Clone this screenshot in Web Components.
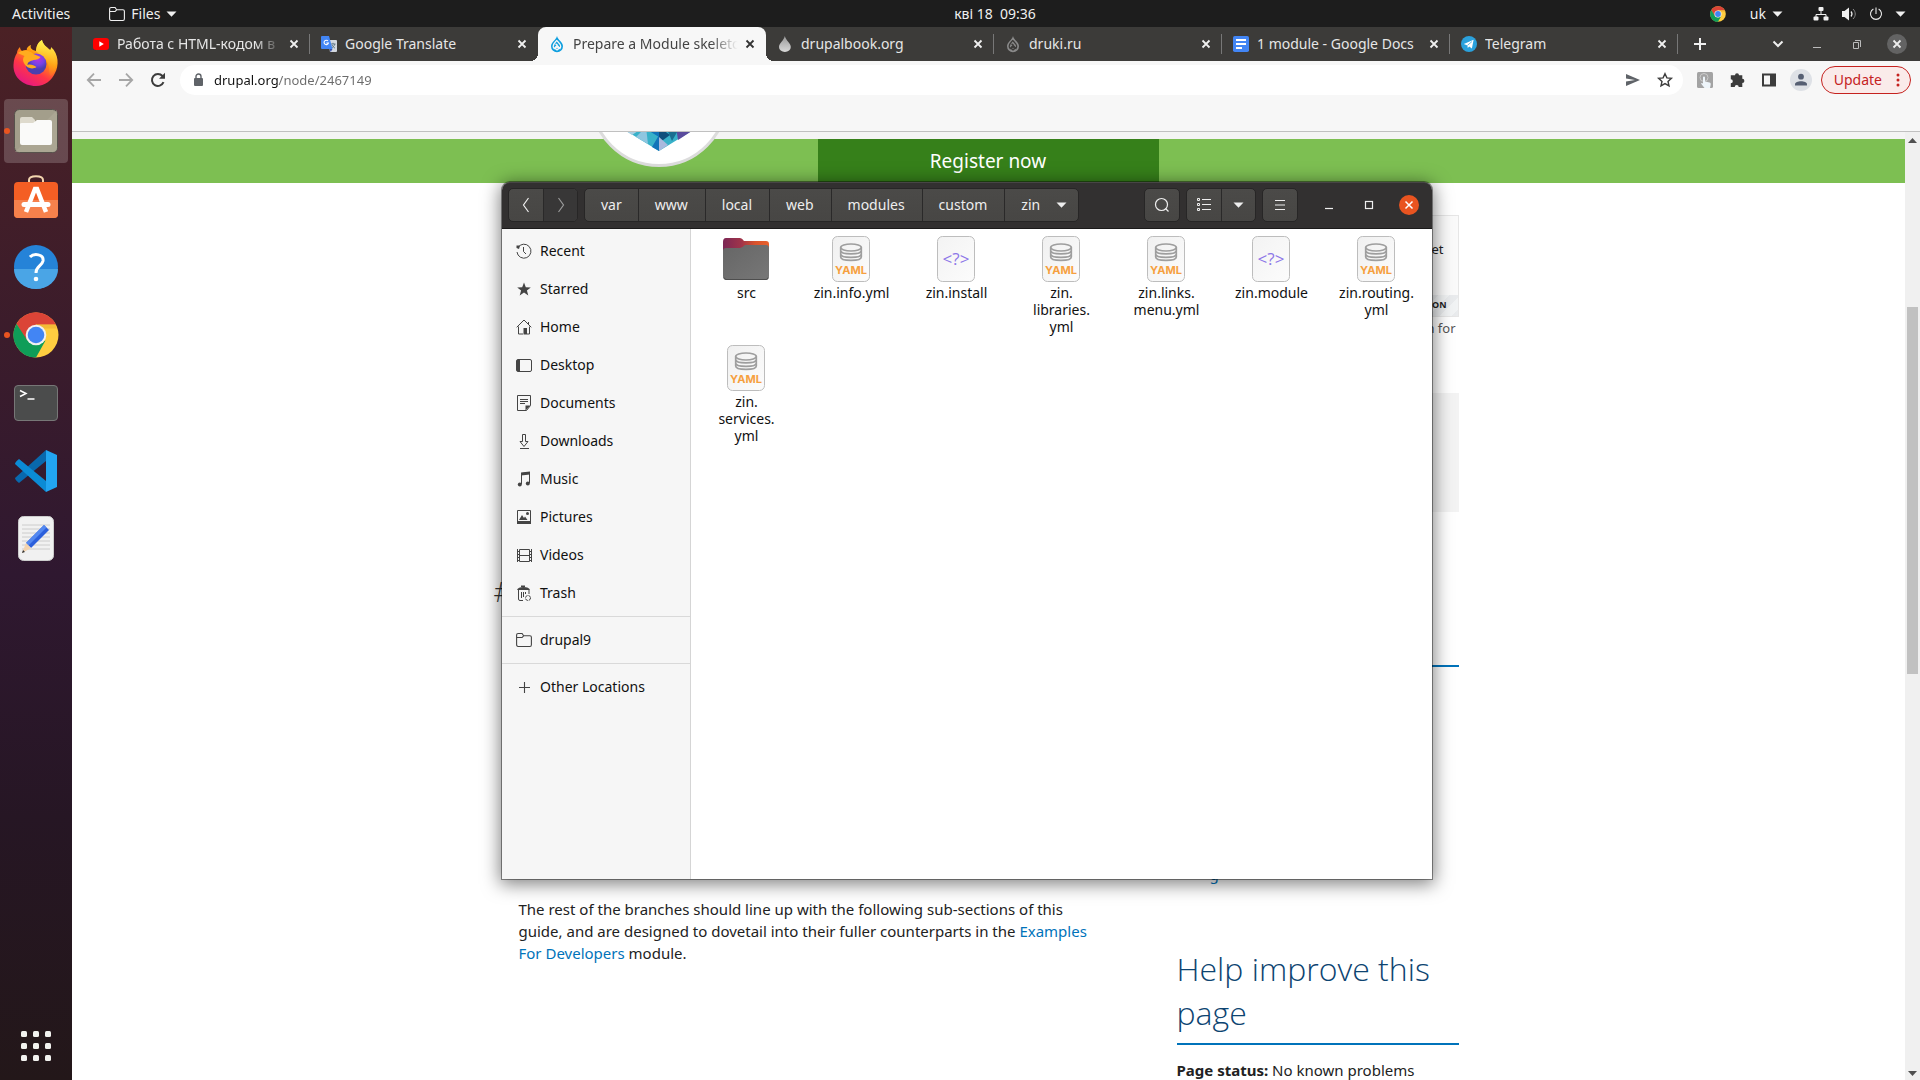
<!DOCTYPE html>
<html lang="en">
<head>
<meta charset="utf-8">
<title>Desktop</title>
<style>
  html, body { margin: 0; height: 100%; overflow: hidden; }
  body { font-family: "Noto Sans", "Open Sans", sans-serif; font-size: 14px; line-height: 20px; color: #222; }
</style>
</head>
<body>
<desk-top></desk-top>
<script>
const ICONS = {
  folderline: [16,16,'<path d="M.6 12.5V3c0-1 .5-1.500 1.500-1.500h4l1.500 2.200h6.300c1 0 1.500.5 1.500 1.500v7.500c0 1.200-.5 1.800-1.500 1.800H2.100C1.100 14.500.6 13.700.6 12.500zM.6 5.500h5.500l1.500-1.700" fill="none" stroke="currentColor" stroke-width="1.100"/>'],
  tri: [11,6,'<path d="M.5.5h10l-5 5.300z" fill="currentColor"/>'],
  x: [10,10,'<path d="M1.500 1.500l7 7m0-7l-7 7" stroke="currentColor" stroke-width="1.800" fill="none"/>'],
  youtube: [16,16,'<rect y="2" width="16" height="12" rx="3" fill="#f00"/><path d="M6.300 5.300v5.400L10.800 8z" fill="#fff"/>'],
  translate: [16,16,'<path d="M7 4h8a1 1 0 0 1 1 1v10a1 1 0 0 1-1 1H9z" fill="#d3d8e0"/><path d="M9.500 8h5M12 6.800V8m1.800 0c-.4 2-2 3.500-3.300 4.200m.5-3.200c.6 1.300 1.800 2.500 3 3.200" stroke="#607988" fill="none"/><path d="M1 0h7l3.500 13H1a1 1 0 0 1-1-1V1a1 1 0 0 1 1-1z" fill="#4285f4"/><path d="M8.500 13h3L9.700 16z" fill="#3750a8"/><path d="M7 5A2.200 2.200 0 1 0 7.400 7H5.300" stroke="#fff" fill="none" stroke-width="1.100"/>'],
  drupal: [16,16,'<path d="M8 0c-.5 2.300-2 3.600-3.300 5C3.200 6.500 2 8.200 2 10.200a6 6 0 0 0 12 0c0-2-1.200-3.700-2.700-5.200C10 3.600 8.500 2.300 8 0z" fill="currentColor"/><path d="M8 4.200c-1.500 2-3.800 3.500-3.800 6 0 .9.400 1.700 1 2.300L8.800 8.600M8 4.800c1.500 1.700 3.700 3.200 3.700 5.500 0 .8-.3 1.500-.7 2.100L6.600 7.700M8 14l1.700-1.400L8 10.800l-1.700 1.800z" fill="none" stroke="var(--hole,#f7f7f7)" stroke-width="1.300"/>'],
  drop: [16,16,'<defs><linearGradient id="dg" x2="0" y2="1"><stop stop-color="#999"/><stop offset="1" stop-color="#d9d9d9"/></linearGradient></defs><path d="M7.800 0C7 4.500 2 7 2 11a5.800 5 0 0 0 11.800 0C13.800 7 8.800 4.500 7.800 0z" fill="url(#dg)"/>'],
  docs: [16,16,'<rect width="16" height="16" rx="1.800" fill="#4285f4"/><path d="M3 4h10M3 8h10M3 12h6" stroke="#fff" stroke-width="2"/>'],
  telegram: [16,16,'<circle cx="8" cy="8" r="8" fill="#2ba1dc"/><path d="M2.800 8l9.800-4.200-1.700 8.700-2.700-2-1.400 1.600-.4-2.700z" fill="#fff"/><path d="M6.500 9.300l4.500-3.800" stroke="#2ba1dc" stroke-width=".7"/>'],
  plus: [16,16,'<path d="M8 2v12M2 8h12" stroke="currentColor" stroke-width="2"/>'],
  chev: [12,8,'<path d="M1.500 1.500L6 6l4.500-4.500" stroke="currentColor" stroke-width="2" fill="none"/>'],
  cmin: [10,10,'<path d="M1 8.500h8" stroke="currentColor"/>'],
  crestore: [10,10,'<path d="M1.500 3.500h5v6h-5zM3 1.500h5.500V8" stroke="currentColor" fill="none"/>'],
  back: [16,16,'<path d="M15 8H2m6-6.300L1.800 8 8 14.300" stroke="currentColor" stroke-width="1.800" fill="none"/>'],
  fwd: [16,16,'<path d="M1 8h13M8 1.700L14.200 8 8 14.300" stroke="currentColor" stroke-width="1.800" fill="none"/>'],
  reload: [16,16,'<path d="M13.500 10.200A6 6 0 1 1 12.500 4l1 1.300" stroke="currentColor" stroke-width="2" fill="none"/><path d="M15 .8v6H9z" fill="currentColor"/>'],
  lock: [10,14,'<rect x="0" y="5" width="9" height="8" rx="1" fill="currentColor"/><path d="M2 6V3.500a2.500 2.500 0 0 1 5 0V6" stroke="currentColor" stroke-width="1.400" fill="none"/>'],
  send: [16,16,'<path d="M1 2l14 6-14 6V9.500L10 8 1 6.500z" fill="currentColor"/>'],
  star: [16,16,'<path d="M8 1.700l1.900 4.200 4.500.4-3.400 3.100 1 4.500L8 11.600l-4 2.300 1-4.500-3.400-3.100 4.500-.4z" stroke="currentColor" stroke-width="1.400" fill="none"/>'],
  touch: [16,16,'<rect width="16" height="16" rx="1.500" fill="#a3a3a3"/><circle cx="7" cy="5.500" r="4" fill="none" stroke="#ccc"/><path d="M6 5.500a1 1 0 0 1 2 0v4l4.500 1c1 .3 1.400 1 1.200 2L13 16H7.500L4 11.500c.5-1 1.500-.5 2 0z" fill="#eef5fa"/>'],
  puzzle: [16,16,'<path d="M6 3.200a2 2 0 0 1 4 0h3.300v3.600a2 2 0 0 1 0 4.200v4H9.700a2 2 0 0 0-4 0H1.800v-3.800a2 2 0 0 0 0-4V3.200z" fill="currentColor"/>'],
  panel: [16,16,'<path d="M1 1.500h14v13H1zM3 3.500v9h6v-9z" fill="currentColor" fill-rule="evenodd"/>'],
  avatar: [22,22,'<circle cx="11" cy="11" r="11" fill="#dee1e6"/><circle cx="11" cy="7.700" r="2.900" fill="#565f73"/><path d="M5 16.500v-1.300c0-4 12-4 12 0v1.300z" fill="#565f73"/>'],
  dots: [4,14,'<circle cx="2" cy="2" r="1.500" fill="currentColor"/><circle cx="2" cy="7" r="1.500" fill="currentColor"/><circle cx="2" cy="12" r="1.500" fill="currentColor"/>'],
  network: [16,16,'<path d="M8 3v5M3 13V8.500h10V13" stroke="currentColor" fill="none"/><rect x="5.500" y="1" width="5" height="4" rx="1" fill="currentColor"/><rect x=".5" y="10.500" width="5" height="4" rx="1" fill="currentColor"/><rect x="10.500" y="10.500" width="5" height="4" rx="1" fill="currentColor"/>'],
  volume: [16,16,'<path d="M1 5h2.500L8 1.500v13L3.500 11H1z" fill="currentColor"/><path d="M10 5.500c1.300 1.600 1.300 3.400 0 5" stroke="currentColor" fill="none" stroke-width="1.200"/><path d="M12 3c3 3 3 7 0 10" stroke="#888" fill="none"/>'],
  power: [16,16,'<path d="M5 2.300a6.300 6.300 0 1 0 6 0M8 .5V8" stroke="currentColor" fill="none" stroke-width="1.200"/>'],
  chrome: [46,46,'<circle cx="23" cy="23" r="22.500" fill="#ffcd40"/><path d="M3.500 11.700A22.500 22.500 0 0 1 43 12.500H23L13 29z" fill="#db4437"/><path d="M3.500 11.700A22.500 22.500 0 0 0 23 45.500L32.500 28.500 23 33 14 28z" fill="#0f9d58"/><path d="M43 12.500H23v4h20.500z" fill="#e8a92c" opacity=".5"/><circle cx="23" cy="23" r="10.300" fill="#f1f1f1"/><circle cx="23" cy="23" r="8.300" fill="#4285f4"/>'],
  firefox: [46,46,'<defs><linearGradient id="fa" x1=".8" y1=".05" x2=".25" y2="1"><stop stop-color="#fff44f"/><stop offset=".35" stop-color="#ff980e"/><stop offset=".65" stop-color="#ff3647"/><stop offset="1" stop-color="#e31587"/></linearGradient><radialGradient id="fb" cx=".6" cy=".25"><stop stop-color="#b833e1"/><stop offset=".6" stop-color="#7542e5"/><stop offset="1" stop-color="#4b3fae"/></radialGradient><linearGradient id="fc" x2="0" y2="1"><stop stop-color="#fff44f"/><stop offset="1" stop-color="#ff980e" stop-opacity=".2"/></linearGradient></defs><path d="M4 13c0-2 1-4 3-6 0 2 1 3 2 4 2-1 3-1 5-1-1-1 1-4 4-5-1 2 0 4 2 5l3 1c0-4 2-9 6-11 1 5 4 6 8 10 1-1 1-2 1-3 8 7 8 19 4 26-3 7-10 13-19 13C10 46 0 37 .5 25 .700 20 2 16 4 13z" fill="url(#fa)"/><path d="M23 11c0-4 2-9 6-11 1 5 4 6 8 10 7 9 8 19 1 26-3-1 0-13-7-18z" fill="url(#fc)"/><circle cx="23" cy="24" r="10.500" fill="url(#fb)"/><path d="M4.500 13c6-4 12-3 16 1l7 3c-1 2-4 3-7 3-3 1-6 2-6 5 3-1 6 0 9 2-4 3-10 1-12-3-2-3-2-6 0-8z" fill="#ffac1e"/>'],
  files: [44,44,'<rect x=".5" y=".5" width="43" height="43" rx="5" fill="#a39e8b" stroke="#57524c"/><path d="M1 43L43 1v38q0 4-4 4z" fill="#b1ac9a" opacity=".6"/><path d="M6 12V10q0-2 2-2h10l3 3v6H6z" fill="#dedacd"/><path d="M6 15q0-1 2-1h11l4-3h13q2 0 2 2v21q0 2-2 2H8q-2 0-2-2z" fill="#fafaf9"/>'],
  software: [44,44,'<g transform="translate(0 -4)"><path d="M15 10V7c0-5 14-5 14 0v3" stroke="#f3d6af" stroke-width="2" fill="none"/><rect x="0" y="9" width="44" height="36" rx="4" fill="#f45e24"/><path d="M0 27h44v14q0 4-4 4H4q-4 0-4-4z" fill="#f6814c"/><path d="M12 39l9-23h2l9 23" stroke="#fff" stroke-width="4.500" fill="none"/><path d="M10 31.500h24" stroke="#fff" stroke-width="5" stroke-linecap="round"/></g>'],
  help: [44,44,'<circle cx="22" cy="22" r="22" fill="#2583d8"/><path d="M0 24h44a22 20 0 0 1-44 0z" fill="#4aa5e6"/><path d="M16 12c4-4 14-3 13 4-1 5-7 5-7 12" stroke="#fff" stroke-width="3" fill="none"/><circle cx="22" cy="34" r="2.300" fill="#fff"/>'],
  terminal: [44,36,'<rect x=".5" y=".5" width="43" height="35" rx="3.500" fill="#4b4c4c" stroke="#777"/><path d="M6 5.500l6 3-6 3" stroke="#fff" stroke-width="1.500" fill="none"/><path d="M13.500 14h7" stroke="#fff" stroke-width="1.500"/>'],
  vscode: [42,42,'<path d="M31 0L0 28q0 2 4 5l27-22z" fill="#0968ad"/><path d="M31 42L0 14q0-2 4-5l27 22z" fill="#0b8bd5"/><path d="M31 0l11 5v32l-11 5z" fill="#22a5f1"/>'],
  editor: [36,46,'<rect x=".5" y=".5" width="35" height="44" rx="5" fill="#f1f1f1" stroke="#ccc"/><path d="M4 9h28M4 13h28M4 17h28M4 21h28M4 25h28M4 29h28M4 33h28" stroke="#ccc"/><path d="M26 9l5 5-18 18-5-5z" fill="#2b5fdc"/><path d="M26 9l2.500 2.500-18 18L8 27z" fill="#5388f0"/><path d="M8 27l5 5-9 5z" fill="#f3d4b0"/><path d="M5 34l2 2-3 1z" fill="#333"/>'],
  apps: [30,30,'<g fill="#f2f2ef"><rect width="6" height="6" rx="1.500"/><rect x="12" width="6" height="6" rx="1.500"/><rect x="24" width="6" height="6" rx="1.500"/><rect y="12" width="6" height="6" rx="1.500"/><rect x="12" y="12" width="6" height="6" rx="1.500"/><rect x="24" y="12" width="6" height="6" rx="1.500"/><rect y="24" width="6" height="6" rx="1.500"/><rect x="12" y="24" width="6" height="6" rx="1.500"/><rect x="24" y="24" width="6" height="6" rx="1.500"/></g>'],
  prev: [8,16,'<path d="M6.500 1L1.500 8l5 7" stroke="currentColor" fill="none" stroke-width="1.200"/>'],
  next: [8,16,'<path d="M1.500 1l5 7-5 7" stroke="currentColor" fill="none" stroke-width="1.200"/>'],
  search: [16,16,'<circle cx="7.500" cy="7.500" r="6" stroke="currentColor" fill="none" stroke-width="1.200"/><path d="M11.500 11.500l3 3" stroke="currentColor" stroke-width="1.300"/>'],
  list: [14,13,'<path d="M.5.500h2v2h-2zM.5 5.500h2v2h-2zM.5 10.500h2v2h-2zM5 1.500h9M5 6.500h9M5 11.500h9" stroke="currentColor" fill="none"/>'],
  menu: [12,12,'<path d="M1 1.500h10M1 6h10M1 10.500h10" stroke="currentColor"/>'],
  wmin: [10,10,'<path d="M1 8.500h8" stroke="currentColor" stroke-width="1.200"/>'],
  wmax: [10,10,'<rect x="1.500" y="1.500" width="7" height="7" stroke="currentColor" fill="none" stroke-width="1.200"/>'],
  wclose: [10,10,'<path d="M1.500 1.500l7 7m0-7l-7 7" stroke="currentColor" stroke-width="1.500"/>'],
  recent: [16,16,'<path d="M2 4.500A7 7 0 1 1 1 9" stroke="currentColor" fill="none"/><path d="M.5 2.500l3.500 0-1 3.500-2.500-1z" fill="currentColor"/><path d="M7.500 4v4.500L10 11" stroke="currentColor" fill="none"/>'],
  starred: [16,16,'<path d="M8 1.500l1.800 4.700 5 .2-3.900 3.100 1.400 4.900L8 11.600l-4.300 2.800 1.400-4.900L1.200 6.400l5-.2z" fill="currentColor"/>'],
  home: [16,16,'<path d="M.7 8.300L8 1l7.300 7.300M2.500 7.500v7.500H7M12.500 3v3M13.500 7.500V15h-2.500" stroke="currentColor" fill="none"/><path d="M7.500 9H11v6.500H7.500z" fill="currentColor"/>'],
  desktop: [16,16,'<rect x=".5" y="2.500" width="15" height="12" rx="1.500" stroke="currentColor" fill="none"/><path d="M1 3h3v11H1z" fill="currentColor"/>'],
  documents: [16,16,'<path d="M1.500.5h13v10l-4 5h-9z" stroke="currentColor" fill="none"/><path d="M4 4.500h8M4 6.500h8M4 8.500h5" stroke="currentColor"/><path d="M9.500 10.500h5l-5 5z" fill="currentColor"/>'],
  downloads: [16,16,'<path d="M6.500 1.500h3v7h2.500l-4 5-4-5h2.500z" stroke="currentColor" fill="none"/><path d="M4 15.500h9" stroke="currentColor"/>'],
  music: [16,16,'<path d="M5.500 13V2.500l8-1V12" stroke="currentColor" fill="none"/><path d="M5 1.500L14 .5v3L5 4.500z" fill="currentColor"/><circle cx="3.800" cy="13.500" r="2" fill="currentColor"/><circle cx="11.800" cy="12.500" r="2" fill="currentColor"/>'],
  pictures: [16,16,'<path d="M1.500 1.500h13v13h-13z" stroke="currentColor" fill="none"/><path d="M1 12h14v3H1zM3 11l3-5 2 3 1-1.500 2.500 3.500z" fill="currentColor"/><circle cx="11.500" cy="4.500" r="1.500" fill="currentColor"/>'],
  videos: [16,16,'<path d="M1.500 2v13M15.500 2v13M3.500 2.500v12h10v-12zM3.500 8.500h10M1 4.500h2.500M1 7.500h2.500M1 10.500h2.500M1 13.500h2.500M13.500 4.500H16M13.500 7.500H16M13.500 10.500H16M13.500 13.500H16" stroke="currentColor" fill="none"/>'],
  trash: [16,16,'<path d="M2.500 5v9q0 1.500 1.500 1.500h3M13 5v4M5.500 7v6M7.500 7v5M9.500 7v2" stroke="currentColor" fill="none"/><path d="M1 5q1-3 6.500-3T14 5zM5 2V.5h4V2z" fill="currentColor"/><circle cx="12" cy="13" r="2.500" stroke="currentColor" fill="none" stroke-dasharray="3 1"/>'],
  add: [16,16,'<path d="M8.500 3v11M3 8.500h11" stroke="currentColor" stroke-width="1.100"/>'],
  folder: [46,46,'<defs><linearGradient id="ga"><stop stop-color="#7c2755"/><stop offset=".4" stop-color="#a0344a"/><stop offset=".7" stop-color="#d9532c"/><stop offset="1" stop-color="#e9612c"/></linearGradient><linearGradient id="gb" x2="1" y2="1"><stop stop-color="#666"/><stop offset="1" stop-color="#777"/></linearGradient></defs><path d="M0 6q0-4 3-4h14q2 0 4 3h22q3 0 3 3v10H0z" fill="url(#ga)"/><path d="M0 15q0-3 3-3h14q2 0 5-3h21q3 0 3 3v28q0 4-3 4H3q-3 0-3-4z" fill="url(#gb)"/><path d="M1 41.500q1 2 2 2h40q2 0 2-2" stroke="#4e4e4e" fill="none"/>'],
  yaml: [38,46,'<defs><linearGradient id="yb" x2="1" y2="1"><stop stop-color="#f0f0f0"/><stop offset="1" stop-color="#fcfcfc"/></linearGradient></defs><rect x=".5" y=".5" width="37" height="45" rx="5" fill="url(#yb)" stroke="#bdbdbd"/><g stroke="#9e9e9e" fill="none" stroke-width="1.700"><ellipse cx="19" cy="11.500" rx="10.300" ry="3.500"/><path d="M8.700 11.500v9.500c0 4.500 20.600 4.500 20.600 0v-9.500M8.700 14.500c0 4.500 20.600 4.500 20.600 0M8.700 18c0 4.500 20.600 4.500 20.600 0"/></g><text x="19" y="38" font-family="Inter,sans-serif" font-weight="700" font-size="11" text-anchor="middle" fill="#f6a03f">YAML</text>'],
  php: [38,46,'<defs><linearGradient id="pb" x2="1" y2="1"><stop stop-color="#f3f3f3"/><stop offset="1" stop-color="#fcfcfc"/></linearGradient></defs><rect x=".5" y=".5" width="37" height="45" rx="5" fill="url(#pb)" stroke="#bdbdbd"/><text x="19" y="29" font-family="Open Sans,sans-serif" font-size="17" text-anchor="middle" fill="#8d76e8">&lt;?&gt;</text>'],
  sbup: [9,5,'<path d="M0 5h9L4.500 0z" fill="#505050"/>'],
  sbdown: [9,5,'<path d="M0 0h9L4.500 5z" fill="#505050"/>'],
  badge: [138,138,'<circle cx="69" cy="69" r="67.500" fill="#fff" stroke="#dcdcdc" stroke-width="3"/><path d="M20 92l49 30 49-30z" fill="#38b1c9"/><path d="M30 98l12 8 12-8zM42 90l12 16 8-16z" fill="#a9cfe2"/><path d="M46 108l10-10 2 17z" fill="#8fc6e0"/><path d="M56 100l13-4v12zM62 118l7-12v16z" fill="#1273b9"/><path d="M69 98l11 8-11 8z" fill="#0f4f7d"/><path d="M69 108l9 8-9 6z" fill="#a9b9dd"/><path d="M76 98h14l-8 14z" fill="#1a6e90"/><path d="M86 98h22l-20 13z" fill="#5a4b9d"/><path d="M98 98h12l-8 5z" fill="#c43c8c"/>']
};

const define = (tag, css, html) => customElements.define(tag, class extends HTMLElement {
  constructor() {
    super();
    this.attachShadow({ mode: 'open' });
  }
  connectedCallback() {
    const attr = n => this.getAttribute(n) || '';
    this.shadowRoot.innerHTML = `<style>*{box-sizing:border-box}button{font:inherit;color:inherit;background:none;border:0;padding:0;margin:0}${css}</style>${typeof html === 'function' ? html(attr) : html}`;
  }
});

define('ui-icon', ':host{display:inline-flex;flex:none}svg{display:block;overflow:visible}', attr => {
  const [w, h, body] = ICONS[attr('name')];
  const size = attr('size') || w;
  return `<svg width="${size}" height="${Math.round(size * h / w)}" viewBox="0 0 ${w} ${h}" aria-hidden="true">${body}</svg>`;
});

/* System bar */
define('top-bar', `
  :host{display:grid;grid-template-columns:1fr auto 1fr;align-items:center;background:#1d1d1d;color:#f0f0f0;height:27px;padding:0 14px 0 12px}
  .side{display:flex;align-items:center}
  .app{display:flex;align-items:center;gap:6px;margin-left:39px}
  .right{justify-content:flex-end;gap:12px}
  .lang{display:flex;align-items:center;gap:6px;margin:0 18px 0 12px}
  .clock{margin-left:72px}`,
`<div class="side"><button>Activities</button><button class="app"><ui-icon name="folderline"></ui-icon>Files<ui-icon name="tri"></ui-icon></button></div>
 <button class="clock">кві 18&nbsp; 09:36</button>
 <div class="side right"><ui-icon name="chrome" size="16"></ui-icon><button class="lang">uk<ui-icon name="tri"></ui-icon></button><ui-icon name="network"></ui-icon><ui-icon name="volume"></ui-icon><ui-icon name="power" size="14"></ui-icon><ui-icon name="tri"></ui-icon></div>`);

/* Dock */
define('dock-item', `
  :host{display:block;position:relative;width:64px;height:64px;border-radius:4px}
  :host([active]){background:rgba(255,255,255,.19)}
  :host([running])::before{content:"";position:absolute;left:0;top:29px;width:6px;height:6px;border-radius:3px;background:#e95420}
  button{display:flex;width:100%;height:100%;align-items:center;justify-content:center}`,
  attr => `<button aria-label="${attr('label')}"><ui-icon name="${attr('icon')}"></ui-icon></button>`);

define('app-dock', `
  :host{display:flex;flex-direction:column;gap:4px;width:72px;padding:4px 4px 2px;background:linear-gradient(#4b2125,#2f1830 52%,#261624 75%,#231719)}
  .apps{margin-top:auto}`,
`<dock-item icon="firefox" label="Firefox"></dock-item>
 <dock-item icon="files" label="Files" active running></dock-item>
 <dock-item icon="software" label="Software"></dock-item>
 <dock-item icon="help" label="Help"></dock-item>
 <dock-item icon="chrome" label="Chrome" running></dock-item>
 <dock-item icon="terminal" label="Terminal"></dock-item>
 <dock-item icon="vscode" label="Code"></dock-item>
 <dock-item icon="editor" label="Editor"></dock-item>
 <dock-item class="apps" icon="apps" label="Applications"></dock-item>`);

/* Browser */
define('browser-tab', `
  :host{display:flex;align-items:center;flex:0 1 228px;min-width:0;height:34px;padding:0 11px;color:#e6e6e6;position:relative;--hole:#3c3b39}
  .title{flex:1;min-width:0;margin:0 4px 0 8px;overflow:hidden;white-space:nowrap;text-overflow:clip}
  :host([long]) .title{-webkit-mask-image:linear-gradient(90deg,#000 82%,transparent 98%);mask-image:linear-gradient(90deg,#000 82%,transparent 98%)}
  button{display:flex;width:10px;height:20px;align-items:center;color:#f0f0f0}
  :host([sep])::after{content:"";position:absolute;right:0;top:7px;width:1px;height:20px;background:#777}
  :host([active]){background:#f7f7f7;color:#444;border-radius:8px 8px 0 0;--hole:#f7f7f7}
  :host([active]) button{color:#333}
  :host([active])::before,:host([active])::after{content:"";position:absolute;bottom:0;width:8px;height:8px;background:radial-gradient(circle at 0 0,transparent 8px,#f7f7f7 8px)}
  :host([active])::before{left:-8px}
  :host([active])::after{right:-8px;background:radial-gradient(circle at 100% 0,transparent 8px,#f7f7f7 8px)}
  .fav{color:var(--fav,#8a8a8a)}`,
  attr => `<ui-icon class="fav" name="${attr('icon')}"></ui-icon><span class="title"><slot></slot></span><button aria-label="Close tab"><ui-icon name="x"></ui-icon></button>`);

define('tab-strip', `
  :host{display:flex;align-items:center;background:#3c3b39;padding:0 13px 0 10px;color:#f0f0f0}
  button{display:flex;align-items:center}
  .new{margin-left:14px}
  .ctl{display:flex;align-items:center;gap:30px;margin-left:auto;color:#bbb}
  .ctl .chev{color:#eee;margin-right:-2px}
  .close{width:20px;height:20px;margin-left:-5px;border-radius:10px;background:#636363;color:#eee;justify-content:center}
  [active]{--fav:#0f9fdf}`,
`<browser-tab icon="youtube" long sep>Работа с HTML-кодом в</browser-tab>
 <browser-tab icon="translate">Google Translate</browser-tab>
 <browser-tab icon="drupal" active long>Prepare a Module skeleton</browser-tab>
 <browser-tab icon="drop" sep>drupalbook.org</browser-tab>
 <browser-tab icon="drupal" sep>druki.ru</browser-tab>
 <browser-tab icon="docs" sep>1 module - Google Docs</browser-tab>
 <browser-tab icon="telegram" sep>Telegram</browser-tab>
 <button class="new" aria-label="New tab"><ui-icon name="plus"></ui-icon></button>
 <div class="ctl"><button class="chev" aria-label="Search tabs"><ui-icon name="chev"></ui-icon></button><button aria-label="Minimize"><ui-icon name="cmin"></ui-icon></button><button aria-label="Restore"><ui-icon name="crestore"></ui-icon></button><button class="close" aria-label="Close"><ui-icon name="x"></ui-icon></button></div>`);

define('browser-toolbar', `
  :host{display:block;background:#f7f7f7;height:71px;border-bottom:1px solid #c0c0c0}
  .row{display:flex;align-items:center;padding:4px 9px 0 14px;gap:16px;color:#3c3c3c}
  .dim{color:#a6a6a6}
  button{display:flex;align-items:center}
  label{flex:1;display:flex;align-items:center;height:30px;border-radius:15px;background:#fff;padding:0 10px 0 14px;gap:10px;margin-left:-2px}
  label ui-icon:first-child{color:#5f6368}
  input{flex:1;min-width:0;height:22px;border:0;outline:0;padding:0;font:inherit;font-size:13px;color:transparent;background:linear-gradient(90deg,#111 64px,#6b6b6b 64px);-webkit-background-clip:text;background-clip:text}
  .acts{display:flex;gap:16px}
  .ext{display:flex;align-items:center;gap:16px;margin-left:-2px}
  .update{height:28px;border:1px solid #c5221f;border-radius:14px;background:#faebea;color:#c5221f;padding:0 10px 0 12px;gap:14px;margin-left:-8px}
  .ext ui-icon[name=avatar]{margin:0 1px 0 -3px}`,
`<div class="row"><button class="dim" aria-label="Back"><ui-icon name="back"></ui-icon></button><button class="dim" aria-label="Forward"><ui-icon name="fwd"></ui-icon></button><button aria-label="Reload"><ui-icon name="reload"></ui-icon></button>
 <label><ui-icon name="lock"></ui-icon><input aria-label="Address" value="drupal.org/node/2467149"><span class="acts"><ui-icon name="send"></ui-icon><ui-icon name="star"></ui-icon></span></label>
 <div class="ext"><ui-icon name="touch"></ui-icon><ui-icon name="puzzle"></ui-icon><ui-icon name="panel"></ui-icon><ui-icon name="avatar"></ui-icon><button class="update">Update<ui-icon name="dots"></ui-icon></button></div></div>`);

define('scroll-bar', `
  :host{display:flex;flex-direction:column;justify-content:space-between;align-items:center;width:15px;background:#f0f0f0;padding:6px 0 4px}
  .track{flex:1;width:11px;display:grid;grid-template-rows:164fr 367fr 397fr}
  .thumb{grid-row:2;background:#c1c1c1}`,
`<ui-icon name="sbup"></ui-icon><div class="track"><div class="thumb"></div></div><ui-icon name="sbdown"></ui-icon>`);

define('event-banner', `
  :host{display:block;background:#f4f4f4;padding-top:7px}
  .bar{display:flex;justify-content:center;background:#7dbf52;height:44px}
  .in{width:940px;display:flex;position:relative}
  .in>ui-icon{position:absolute;left:71px;top:-110px}
  a{width:341px;margin-left:299px;background:#36801a;color:#fff;font-size:19px;line-height:44px;text-align:center;text-decoration:none}`,
`<div class="bar"><div class="in"><ui-icon name="badge"></ui-icon><a href="#register">Register now</a></div></div>`);

define('side-ad', `
  :host{display:block;text-align:right;font-size:13px}
  .box{height:102px;border:1px solid #e6e6e6;background:#fafafa;display:flex;flex-direction:column;margin-top:32px}
  p{margin:0}
  .copy{flex:1;padding:22px 14px 0}
  .by{height:21px;line-height:19px;padding-right:11px;font-size:9px;font-weight:700;background:repeating-linear-gradient(135deg,#e9ebed 0 8px,#f1f3f4 8px 16px)}
  .note{color:#555;padding-right:3px}
  .grey{height:119px;background:#f3f3f3;margin-top:54px}`,
`<div class="box"><p class="copy">et</p><p class="by">BON</p></div><p class="note">n for</p><div class="grey"></div>`);

define('doc-page', `
  :host{display:flex;flex:1;min-height:0;overflow:hidden;background:#fff}
  main{flex:1;min-width:0}
  .wrap{width:940px;margin:0 auto;display:grid;grid-template-columns:600px 282px;justify-content:space-between;font-size:15px;line-height:22px;color:#222}
  h2{font-weight:300;font-family:"Open Sans",sans-serif}
  .anchor{margin:388px 0 0 -25px;font-size:28px;line-height:40px;color:#333}
  p{margin:0}
  .text{margin-top:287px;padding-right:10px}
  a{color:#0073ba;text-decoration:none}
  .rule{height:2px;background:#0073ba;margin-top:153px}
  .link{margin:196px 0 0 33px}
  .help{margin:62px 0 0;font-size:32px;line-height:44px;color:#0d4471;padding-bottom:8px;border-bottom:2px solid #0073ba}
  .status{margin-top:14px}`,
`<main><event-banner></event-banner><div class="wrap"><article><h2 class="anchor">#</h2><p class="text">The rest of the branches should line up with the following sub-sections of this guide, and are designed to dovetail into their fuller counterparts in the <a href="#examples">Examples For Developers</a> module.</p></article>
 <aside><side-ad></side-ad><div class="rule"></div><p class="link"><a href="#g">g</a></p><h2 class="help">Help improve this page</h2><p class="status"><b>Page status:</b> No known problems</p></aside></div></main><scroll-bar></scroll-bar>`);

define('web-browser', `:host{display:flex;flex-direction:column;min-width:0;min-height:0}`,
`<tab-strip></tab-strip><browser-toolbar></browser-toolbar><doc-page></doc-page>`);

/* File manager */
define('file-header', `
  :host{display:flex;align-items:center;height:47px;padding:0 13px 2px 6px;background:#323030;border-radius:8px 8px 0 0;border-top:1px solid #474545;border-bottom:1px solid #1b1a1a;color:#eee}
  .grp{display:flex;border:1px solid #272626;border-radius:5px;background:linear-gradient(#4b4a48,#474644);overflow:hidden}
  button{display:flex;align-items:center;justify-content:center;height:32px;min-width:34px}
  .grp button+button{border-left:1px solid #2a2929}
  .off{background:#383737;color:#999}
  .path{margin-left:6px}
  .path button{padding:0 16px}
  .path button+button{padding:0 17px 0 16px}
  .path .cur.cur{gap:16px;padding:0 11px 0 16px}
  .tools{display:flex;gap:6px;margin-left:auto}
  .win{display:flex;align-items:center;gap:30px;margin-left:26px}
  .win button{min-width:0;height:20px}
  .win .close{width:20px;border-radius:10px;background:#e95420;color:#fff;margin-left:-5px}`,
`<div class="grp"><button aria-label="Back"><ui-icon name="prev"></ui-icon></button><button class="off" aria-label="Forward"><ui-icon name="next"></ui-icon></button></div>
 <div class="grp path"><button>var</button><button>www</button><button>local</button><button>web</button><button>modules</button><button>custom</button><button class="cur">zin<ui-icon name="tri"></ui-icon></button></div>
 <div class="tools"><div class="grp"><button aria-label="Search"><ui-icon name="search"></ui-icon></button></div><div class="grp"><button aria-label="List view"><ui-icon name="list"></ui-icon></button><button aria-label="View options"><ui-icon name="tri"></ui-icon></button></div><div class="grp"><button aria-label="Menu"><ui-icon name="menu"></ui-icon></button></div></div>
 <div class="win"><button aria-label="Minimize"><ui-icon name="wmin"></ui-icon></button><button aria-label="Maximize"><ui-icon name="wmax"></ui-icon></button><button class="close" aria-label="Close"><ui-icon name="wclose"></ui-icon></button></div>`);

define('place-item', `:host{display:block}a{display:flex;align-items:center;gap:8px;height:38px;padding:0 14px;color:#111;text-decoration:none}ui-icon{color:#444}`,
  attr => `<a href="#${attr('icon')}"><ui-icon name="${attr('icon')}"></ui-icon><slot></slot></a>`);

define('places-list', `:host{display:block;width:189px;background:#f6f6f6;border-right:1px solid #d5d5d5;padding-top:3px}hr{border:0;height:1px;background:#d9d9d9;margin:4px 0}`,
`<place-item icon="recent">Recent</place-item><place-item icon="starred">Starred</place-item><place-item icon="home">Home</place-item><place-item icon="desktop">Desktop</place-item><place-item icon="documents">Documents</place-item><place-item icon="downloads">Downloads</place-item><place-item icon="music">Music</place-item><place-item icon="pictures">Pictures</place-item><place-item icon="videos">Videos</place-item><place-item icon="trash">Trash</place-item><hr><place-item icon="folderline">drupal9</place-item><hr><place-item icon="add">Other Locations</place-item>`);

define('file-item', `:host{display:flex;flex-direction:column;align-items:center;gap:2px;width:105px;height:109px;line-height:17px;color:#111;text-align:center}span{padding-left:2px}`,
  attr => `<ui-icon name="${attr('icon')}"></ui-icon><span>${attr('label').replaceAll('|', '<br>')}</span>`);

define('file-grid', `:host{display:flex;flex-wrap:wrap;align-content:flex-start;flex:1;background:#fff;padding:7px 3px 0 2px}`,
`<file-item icon="folder" label="src"></file-item><file-item icon="yaml" label="zin.info.yml"></file-item><file-item icon="php" label="zin.install"></file-item><file-item icon="yaml" label="zin.|libraries.|yml"></file-item><file-item icon="yaml" label="zin.links.|menu.yml"></file-item><file-item icon="php" label="zin.module"></file-item><file-item icon="yaml" label="zin.routing.|yml"></file-item><file-item icon="yaml" label="zin.|services.|yml"></file-item>`);

define('file-manager', `
  :host{display:flex;flex-direction:column;border-radius:8px 8px 0 0;box-shadow:0 0 0 1px rgba(0,0,0,.4),0 3px 18px 2px rgba(0,0,0,.5)}
  .body{display:flex;flex:1;min-height:0}`,
`<file-header></file-header><div class="body"><places-list></places-list><file-grid></file-grid></div>`);

define('desk-top', `
  :host{display:grid;grid-template:27px minmax(0,1fr)/72px minmax(0,1fr);height:100vh;position:relative}
  top-bar{grid-column:1/3}
  file-manager{position:absolute;left:502px;top:182px;width:930px;height:697px}`,
`<top-bar></top-bar><app-dock></app-dock><web-browser></web-browser><file-manager></file-manager>`);
</script>
</body>
</html>
